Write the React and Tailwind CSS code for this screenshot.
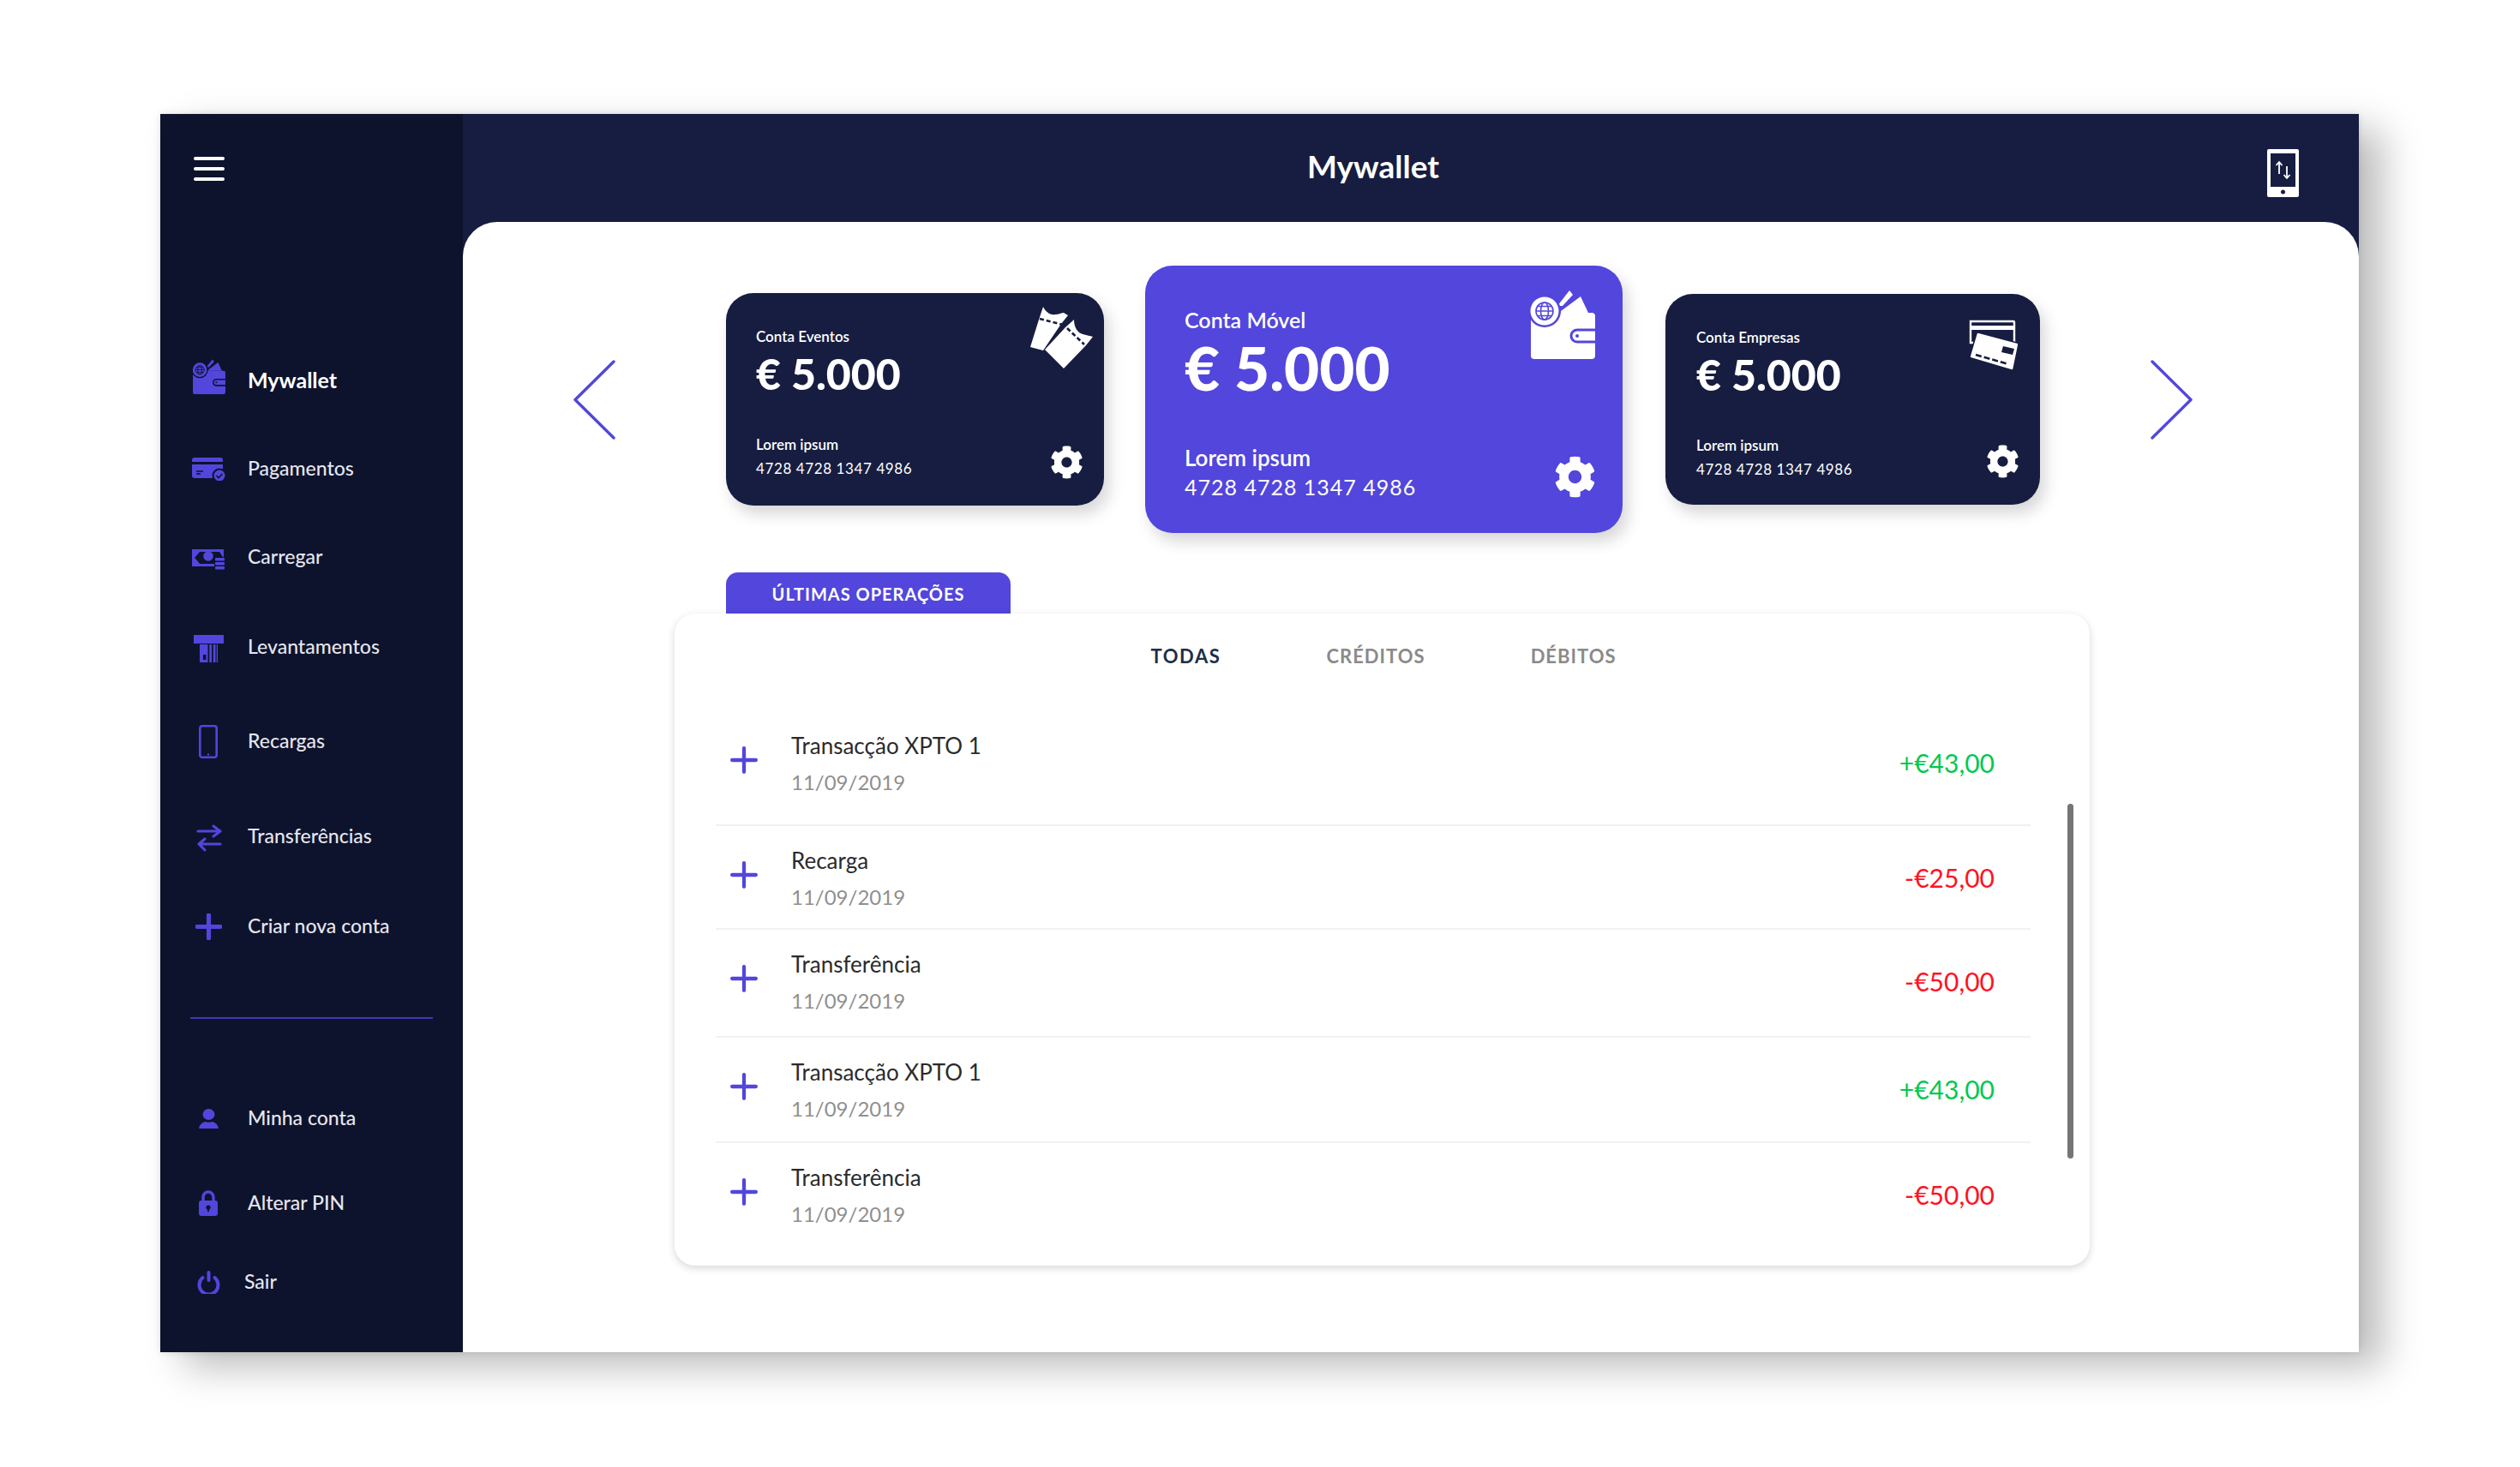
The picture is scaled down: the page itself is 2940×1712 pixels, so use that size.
import React from "react";
import { FaCog } from "react-icons/fa";

const NAVY = "#171d41";
const SIDE = "#0d132d";
const PURPLE = "#5246dc";

function WalletIcon({ className, cut }) {
  return (
    <svg viewBox="0 0 77 81" className={className} fill="currentColor">
      <path d="M33 19L47 1l4 5-12 13z" />
      <path d="M37 25L60 8l9 19H37z" />
      <path d="M6 27h67a4 4 0 0 1 4 4v46a4 4 0 0 1-4 4H6a4 4 0 0 1-4-4V31a4 4 0 0 1 4-4z" />
      <circle cx="18" cy="25" r="19" fill={cut} />
      <circle cx="18" cy="25" r="16.5" />
      <g fill="none" stroke={cut} strokeWidth="1.6">
        <circle cx="18" cy="25" r="10" />
        <ellipse cx="18" cy="25" rx="4.5" ry="10" />
        <path d="M8 25h20M10 19.5h16M10 30.5h16" />
      </g>
      <path d="M77 47H56a7 7 0 0 0 0 14h21" fill="currentColor" stroke={cut} strokeWidth="3" />
      <circle cx="56" cy="54" r="2" fill={cut} />
    </svg>
  );
}

function TicketsIcon({ className }) {
  return (
    <svg viewBox="0 0 90 90" className={className} fill="#fff">
      <path d="M22 8C25 14 30 18 36 17C40 17 44 15 46 15L51 18L43 28L22 59L7 55L17 23Z" />
      <path d="M58 23C58 29 60 34 63 37C67 41 74 41 80 43L72 53L46 80L24 58L48 32Z" />
      <path d="M18 22L45 29M50 33L70 52" stroke={NAVY} strokeWidth="2.6" strokeDasharray="5 3" fill="none" />
    </svg>
  );
}

function CardsIcon({ className }) {
  return (
    <svg viewBox="0 0 80 80" className={className}>
      <path d="M14 13h50a1 1 0 0 1 1 1v24H14z" fill="none" stroke="#fff" strokeWidth="2.4" />
      <path d="M14 18h51v5H14z" fill="#fff" />
      <path d="M21 27a2 2 0 0 1 2-1l45 12a2 2 0 0 1 2 2l-6 29a2 2 0 0 1-2 1L15 56a2 2 0 0 1-2-2z" fill="#fff" stroke={NAVY} strokeWidth="1.6" />
      <path d="M52 42l13 3-2 7-13-3z" fill={NAVY} />
      <path d="M20 52l38 11" stroke={NAVY} strokeWidth="2.6" strokeDasharray="7 3" />
    </svg>
  );
}

function PhoneIcon() {
  return (
    <svg viewBox="0 0 37 56" className="w-[37px] h-[56px] mt-[12px]">
      <rect x="0" y="0" width="37" height="56" rx="2" fill="#fff" />
      <rect x="4" y="5" width="29" height="39" fill={NAVY} />
      <circle cx="18.5" cy="50" r="2.5" fill={NAVY} />
      <path d="M14 29V15M10.5 19l3.5-4 3.5 4M23 20v14M19.5 30l3.5 4 3.5-4" fill="none" stroke="#fff" strokeWidth="1.8" />
    </svg>
  );
}

function CardIcon() {
  return (
    <svg viewBox="0 0 39 27" className="w-[39px] h-[27px]" fill="currentColor">
      <path d="M3 0h30a3 3 0 0 1 3 3v2H0V3a3 3 0 0 1 3-3z" />
      <path d="M0 8h36v16H3a3 3 0 0 1-3-3z" />
      <path d="M5 16h8M5 19h5" stroke={SIDE} strokeWidth="1.4" />
      <circle cx="32" cy="21" r="7.5" stroke={SIDE} strokeWidth="2" />
      <path d="M28.5 21l2.5 2.5 4.5-4.5" stroke={SIDE} strokeWidth="1.6" fill="none" />
    </svg>
  );
}

function CashIcon() {
  return (
    <svg viewBox="0 0 55 55" className="w-[55px] h-[55px] shrink-0 mt-[7px]" fill="currentColor">
      <path d="M8 15h37v20H8z" />
      <path d="M11 25l6-7h23l4 6-1 4H14z M14 28l3 4h17v-4z" fill={SIDE} />
      <circle cx="27" cy="23" r="5.8" />
      <path d="M34 24h12v15H34z" fill={SIDE} />
      <rect x="35" y="25" width="11" height="3.4" rx="1" />
      <rect x="35" y="30" width="11" height="3.4" rx="1" />
      <rect x="35" y="35" width="11" height="3.4" rx="1" />
    </svg>
  );
}

function AtmIcon() {
  return (
    <svg viewBox="0 0 55 55" className="w-[55px] h-[55px] shrink-0 mt-[7px]" fill="currentColor">
      <path d="M10 10h35v10H10z" />
      <path d="M17 21h21v21H17z" />
      <path d="M26.5 21h1.8v21h-1.8zM31 21h1.8v21H31zM35.5 21h1.2v21h-1.2z" fill={SIDE} />
      <rect x="21" y="33" width="3.4" height="6" fill={SIDE} />
    </svg>
  );
}

function TabletIcon() {
  return (
    <svg viewBox="0 0 22 39" className="w-[22px] h-[39px]" fill="none">
      <rect x="1.3" y="1.3" width="19.4" height="36.4" rx="2.5" stroke="currentColor" strokeWidth="2.6" />
      <circle cx="11" cy="34.5" r="1.2" fill="currentColor" />
    </svg>
  );
}

function TransferIcon() {
  return (
    <svg viewBox="0 0 45 45" className="w-[45px] h-[45px] shrink-0 mt-[5px]" fill="none" stroke="currentColor" strokeWidth="3" strokeLinecap="round" strokeLinejoin="round">
      <path d="M10 14h25M28 8l8 6-8 6M36 29H12M18 23l-7 6 7 7" />
    </svg>
  );
}

function PlusIcon({ className, width = 4 }) {
  return (
    <svg viewBox="0 0 30 30" className={className} fill="none" stroke="currentColor" strokeWidth={width} strokeLinecap="round">
      <path d="M15 2v26M2 15h26" />
    </svg>
  );
}

function UserIcon() {
  return (
    <svg viewBox="0 0 23 23" className="w-[23px] h-[23px]" fill="currentColor">
      <ellipse cx="11.5" cy="6.5" rx="7" ry="6.5" />
      <path d="M0 23c1-5 4-7 7-8 3 1 6 1 9 0 3 1 6 3 7 8z" />
    </svg>
  );
}

function LockIcon() {
  return (
    <svg viewBox="0 0 22 30" className="w-[22px] h-[30px]" fill="currentColor">
      <path d="M5 13V8a6 6 0 0 1 12 0v5" fill="none" stroke="currentColor" strokeWidth="3.4" />
      <rect x="0" y="12" width="22" height="18" rx="3" />
      <circle cx="11" cy="20" r="2.6" fill={SIDE} />
      <rect x="10" y="20" width="2" height="5" fill={SIDE} />
    </svg>
  );
}

function PowerIcon() {
  return (
    <svg viewBox="0 0 27 27" className="w-[27px] h-[27px]" fill="none" stroke="currentColor" strokeWidth="4" strokeLinecap="round">
      <path d="M6.5 8a11 11 0 1 0 14 0M13.5 2v9" />
    </svg>
  );
}

function Chevron({ d }) {
  return (
    <svg viewBox="0 0 49 93" className="w-[49px] h-[93px] shrink-0" fill="none" stroke={PURPLE} strokeWidth="3.4" strokeLinecap="round" strokeLinejoin="round">
      <path d={d} />
    </svg>
  );
}

const small = {
  name: "text-[17px] leading-[24px] font-semibold",
  value: "text-[50px] leading-[50px] font-black mt-[6px]",
  lorem: "text-[17px] leading-[24px] font-semibold mt-[46px]",
  num: "text-[17px] leading-[24px] mt-[4px] tracking-[0.6px]",
  pad: "pl-[35px] pt-[39px]",
  gear: "w-[39px] h-[39px] mr-[24px] mb-[31px]",
};

const smallRight = { ...small, pad: "pl-[36px] pt-[39px]" };

const big = {
  name: "text-[25px] leading-[34px] font-semibold",
  value: "text-[71px] leading-[72px] font-black mt-[3px]",
  lorem: "text-[26px] leading-[34px] font-semibold mt-[52px]",
  num: "text-[25px] leading-[34px] tracking-[1px]",
  pad: "pl-[46px] pt-[46px]",
  gear: "w-[49px] h-[49px] mr-[31px] mb-[41px]",
};

function AccountCard({ s, title, icon, className }) {
  return (
    <div className={"flex justify-between text-white shrink-0 " + className}>
      <div className={s.pad}>
        <div className={s.name}>{title}</div>
        <div className={s.value}>€ 5.000</div>
        <div className={s.lorem}>Lorem ipsum</div>
        <div className={s.num}>4728 4728 1347 4986</div>
      </div>
      <div className="flex flex-col items-end justify-between">
        {icon}
        <FaCog className={s.gear} />
      </div>
    </div>
  );
}

const nav = [
  { label: "Mywallet", icon: <WalletIcon className="w-[39px] h-[41px] -mt-[8px]" cut={SIDE} />, cls: "", text: "text-[25px] font-bold text-white pt-[3px]" },
  { label: "Pagamentos", icon: <CardIcon />, cls: "mt-[44px]" },
  { label: "Carregar", icon: <CashIcon />, cls: "mt-[43px]" },
  { label: "Levantamentos", icon: <AtmIcon />, cls: "mt-[45px]" },
  { label: "Recargas", icon: <TabletIcon />, cls: "mt-[50px]" },
  { label: "Transferências", icon: <TransferIcon />, cls: "mt-[51px]" },
  { label: "Criar nova conta", icon: <PlusIcon className="w-[31px] h-[31px]" width={5} />, cls: "mt-[45px]" },
];

const rows = [
  { name: "Transacção XPTO 1", amount: "+€43,00", plus: true, h: "h-[134px]" },
  { name: "Recarga", amount: "-€25,00", h: "h-[121px]" },
  { name: "Transferência", amount: "-€50,00", h: "h-[126px]" },
  { name: "Transacção XPTO 1", amount: "+€43,00", plus: true, h: "h-[123px]" },
  { name: "Transferência", amount: "-€50,00", h: "h-[120px]", last: true },
];

function NavRow({ item }) {
  return (
    <div className={"flex items-center h-[60px] " + item.cls}>
      <div className="w-[42px] flex justify-center text-[#5246dc]">{item.icon}</div>
      <span className={"ml-[25px] -mt-[2px] " + (item.text || "text-[23px] font-medium text-[#e6e6ee]")}>{item.label}</span>
    </div>
  );
}

export default function App() {
  return (
    <div className="w-[2940px] h-[1712px] bg-white pt-[133px] pl-[187px] overflow-hidden font-[Lato,sans-serif]">
      <div className="w-[2565px] h-[1445px] flex shadow-[28px_18px_42px_rgba(0,0,0,0.26),0_0_8px_rgba(0,0,0,0.12)]">
        {/* sidebar */}
        <aside className="w-[353px] shrink-0 bg-[#0d132d] pl-[35px] pt-[50px]">
          <div className="ml-[4px] w-[36px] flex flex-col gap-[8px]">
            <div className="h-[4px] rounded-full bg-white" />
            <div className="h-[4px] rounded-full bg-white" />
            <div className="h-[4px] rounded-full bg-white" />
          </div>
          <nav className="mt-[202px]">
            {nav.map((item) => (
              <NavRow key={item.label} item={item} />
            ))}
          </nav>
          <div className="mt-[76px] w-[283px] h-[2px] bg-[#4238b8]" />
          <div className="mt-[86px]">
            <NavRow item={{ label: "Minha conta", icon: <UserIcon />, cls: "" }} />
            <NavRow item={{ label: "Alterar PIN", icon: <LockIcon />, cls: "mt-[39px]" }} />
            <div className="flex items-center h-[60px] mt-[32px]">
              <div className="w-[42px] flex justify-center text-[#5246dc]">
                <PowerIcon />
              </div>
              <span className="ml-[21px] -mt-[2px] text-[23px] font-medium text-[#e6e6ee]">Sair</span>
            </div>
          </div>
        </aside>

        <div className="flex-1 flex flex-col bg-[#171d41]">
          <header className="h-[126px] shrink-0 flex items-center pr-[70px] text-white">
            <h1 className="ml-[985px] text-[37px] font-bold -mt-[4px]">Mywallet</h1>
            <div className="ml-auto">
              <PhoneIcon />
            </div>
          </header>

          <main className="flex-1 bg-white rounded-t-[40px] pt-[51px]">
            <div className="flex items-center pl-[129px]">
              <Chevron d="M47 2L2 46.5 47 91" />
              <AccountCard
                s={small}
                title="Conta Eventos"
                className="ml-[129px] w-[441px] h-[248px] rounded-[32px] bg-[#171d41] shadow-[6px_10px_18px_rgba(0,0,0,0.16)]"
                icon={<TicketsIcon className="w-[90px] h-[90px] mt-[8px] mr-[3px]" />}
              />
              <AccountCard
                s={big}
                title="Conta Móvel"
                className="ml-[48px] w-[557px] h-[312px] rounded-[32px] bg-[#5246dc] shadow-[6px_10px_18px_rgba(0,0,0,0.16)]"
                icon={<WalletIcon className="w-[77px] h-[81px] mt-[28px] mr-[32px] text-white" cut={PURPLE} />}
              />
              <AccountCard
                s={smallRight}
                title="Conta Empresas"
                className="ml-[50px] w-[437px] h-[246px] rounded-[32px] bg-[#171d41] shadow-[6px_10px_18px_rgba(0,0,0,0.16)]"
                icon={<CardsIcon className="w-[80px] h-[80px] mt-[19px] mr-[15px]" />}
              />
              <div className="ml-[129px]">
                <Chevron d="M2 2l45 44.5L2 91" />
              </div>
            </div>

            <div className="mt-[46px] ml-[307px] w-[332px] h-[48px] rounded-t-[14px] bg-[#5246dc] flex items-center justify-center text-white text-[20px] font-bold tracking-[1px]">
              <span className="mt-[2px]">ÚLTIMAS OPERAÇÕES</span>
            </div>

            <section className="relative ml-[247px] w-[1651px] h-[761px] rounded-[24px] bg-white shadow-[0_3px_10px_rgba(0,0,0,0.16)] pl-[48px] pr-[69px]">
              <div className="flex justify-center gap-[123px] pt-[35px] pl-[24px] mb-[49px] text-[22px] leading-[30px] font-bold tracking-[1px] text-[#8a8a8a]">
                <span className="text-[#1c3048] tracking-[1.6px]">TODAS</span>
                <span>CRÉDITOS</span>
                <span>DÉBITOS</span>
              </div>
              {rows.map((r, i) => (
                <div key={i} className={"flex items-start pt-[22px] pl-[17px] pr-[42px] " + r.h + (r.last ? "" : " border-b-2 border-[#f1f1f1]")}>
                  <PlusIcon className="w-[32px] h-[32px] mt-[19px] text-[#5246dc]" />
                  <div className="ml-[39px] flex-1">
                    <div className="text-[26px] leading-[36px] text-[#2b2b2b]">{r.name}</div>
                    <div className="mt-[7px] text-[24px] leading-[36px] text-[#8f8f8f]">11/09/2019</div>
                  </div>
                  <div className={"mt-[20px] text-[30px] leading-[36px] " + (r.plus ? "text-[#00c853]" : "text-[#ff1222]")}>{r.amount}</div>
                </div>
              ))}
              <div className="absolute left-[1625px] top-[222px] w-[7px] h-[414px] rounded-full bg-[#757575]" />
            </section>
          </main>
        </div>
      </div>
    </div>
  );
}
